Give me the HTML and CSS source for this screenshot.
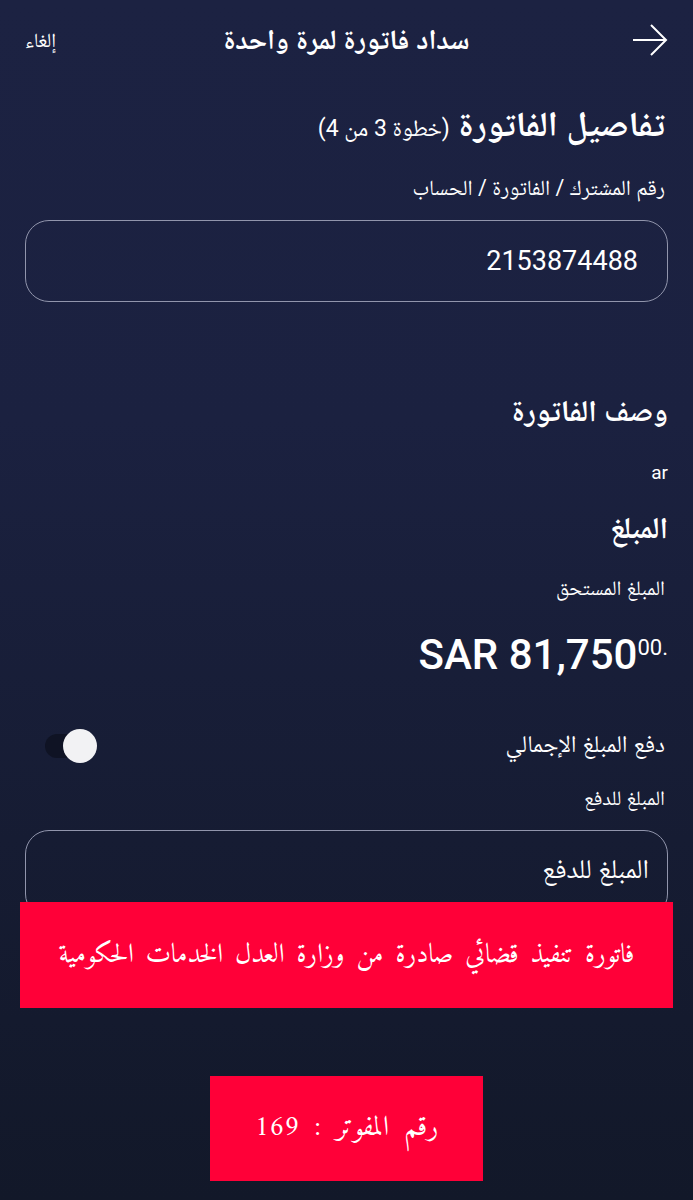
FILE: index.html
```html
<!DOCTYPE html>
<html lang="ar" dir="rtl">
<head>
<meta charset="UTF-8">
<link rel="stylesheet" href="styles.css">
</head>
<body>
<div class="topbar">
  <a class="back" href="#">
    <svg width="36" height="32" viewBox="0 0 36 32"><path d="M1 16H34M19 1L34 16L19 31" fill="none" stroke="#fff" stroke-width="2"/></svg>
  </a>
  <div class="title">سداد فاتورة لمرة واحدة</div>
  <a class="cancel" href="#">إلغاء</a>
</div>

<div class="page">
  <h1 class="step">تفاصيل الفاتورة <span>(خطوة 3 من 4)</span></h1>
  <div class="label first">رقم المشترك / الفاتورة / الحساب</div>
  <div class="field"><span class="value">2153874488</span></div>

  <h2 class="section desc">وصف الفاتورة</h2>
  <div class="plain">ar</div>

  <h2 class="section amt">المبلغ</h2>
  <div class="label due">المبلغ المستحق</div>
  <div class="amount" dir="ltr">SAR 81,750<sup>00.</sup></div>

  <div class="toggle-row">
    <span class="toggle-text">دفع المبلغ الإجمالي</span>
    <label class="switch"><input type="checkbox"><span class="knob"></span></label>
  </div>
  <div class="label pay-label">المبلغ للدفع</div>
  <div class="field pay"><span class="placeholder">المبلغ للدفع</span></div>

  <div class="notice">فاتورة تنفيذ قضائي صادرة من وزارة العدل الخدمات الحكومية</div>
  <div class="biller">رقم المفوتر : <span class="num">169</span></div>
</div>
</body>
</html>
```
FILE: styles.css
```css
body{margin:0;min-height:1200px;background:linear-gradient(180deg,#1c2242 0%,#1b2140 35%,#161c33 70%,#121829 100%);color:#fff;font-family:Roboto,'Noto Naskh Arabic',sans-serif}
a{color:#fff;text-decoration:none}
*{box-sizing:border-box}

.topbar{display:grid;grid-template-columns:1fr auto 1fr;align-items:center;padding:22px 25px 0 25px;height:58px}
.back{display:flex;justify-self:start}
.title{font-size:28px;font-weight:bold;line-height:36px}
.cancel{justify-self:end;font-size:20px;line-height:36px}

.page{padding:0 25px}
.step{margin:45px 3px 0 0;font-size:35px;font-weight:bold;line-height:44px}
.step span{font-size:23px;font-weight:normal}
.label{font-size:20.5px;line-height:30px;margin-right:3px}
.label.first{margin-top:22px;font-size:21.5px}
.field{height:82px;border:1.5px solid #9195ac;border-radius:24px;display:flex;align-items:center;padding:0 29px;margin-top:17px}
.value{font-size:27px;line-height:1}
.section{margin:0;font-size:30px;font-weight:bold;line-height:40px}
.section.desc{margin-top:89px}
.plain{font-size:19px;line-height:30px;margin-top:27px}
.section.amt{margin-top:20px}
.label.due{margin-top:25px}
.amount{margin-top:28px;font-size:42px;font-weight:500;line-height:48px;text-align:right}
.amount sup{font-size:22px;font-weight:normal;vertical-align:top;line-height:34px}

.toggle-row{display:flex;justify-content:space-between;align-items:center;margin-top:50px;height:34px}
.toggle-text{font-size:24px;margin-right:3px}
.switch{position:relative;width:54px;height:34px;margin-left:20px}
.switch input{display:none}
.switch:before{content:"";position:absolute;left:0;top:5px;width:36px;height:24px;border-radius:12px;background:#0f1324}
.knob{position:absolute;left:18px;top:0;width:34px;height:34px;border-radius:50%;background:#f2f2f4}
.label.pay-label{margin-top:20px}
.field.pay{margin-top:17px;height:88px;align-items:flex-start;padding-top:20px;padding-right:18px}
.placeholder{font-size:27px;line-height:36px}

.notice{margin:-16px -5px 0;height:106px;background:#ff0038;display:flex;align-items:center;justify-content:center;font-family:Amiri,'Liberation Serif',serif;font-size:27px;word-spacing:4px;position:relative}
.biller{margin:68px auto 0;width:273px;height:105px;line-height:105px;background:#ff0038;text-align:center;font-family:Amiri,'Liberation Serif',serif;font-size:28px;word-spacing:7px}
.biller .num{letter-spacing:4px}
```
